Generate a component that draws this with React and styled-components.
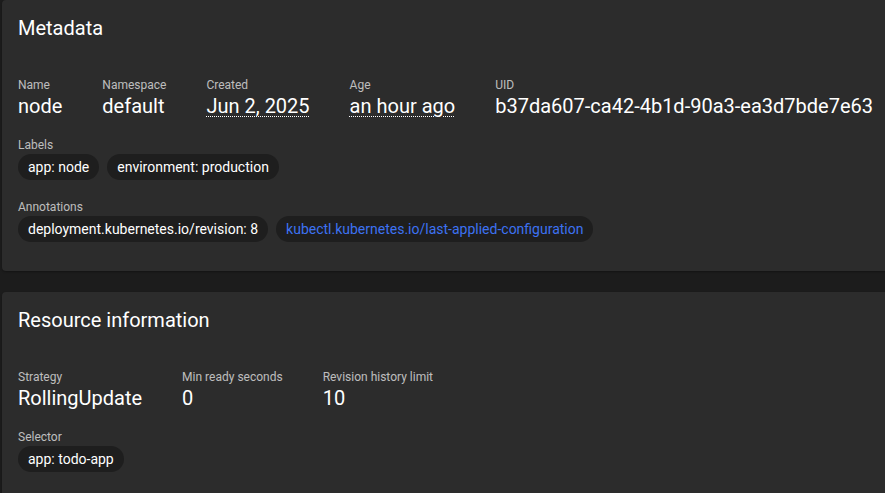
import React from 'react'
import styled, { createGlobalStyle } from 'styled-components'

const GlobalStyle = createGlobalStyle`
  html, body {
    margin: 0;
    padding: 0;
    background: #1c1c1c;
    overflow: hidden;
  }
  body {
    font-family: Roboto, "Liberation Sans", Arial, sans-serif;
    color: #fff;
  }
`

const metadata = {
  fields: [
    { label: 'Name', value: 'node' },
    { label: 'Namespace', value: 'default' },
    { label: 'Created', value: 'Jun 2, 2025', dotted: true },
    { label: 'Age', value: 'an hour ago', dotted: true },
    { label: 'UID', value: 'b37da607-ca42-4b1d-90a3-ea3d7bde7e63' },
  ],
  labels: ['app: node', 'environment: production'],
  annotations: [
    { text: 'deployment.kubernetes.io/revision: 8' },
    { text: 'kubectl.kubernetes.io/last-applied-configuration', link: true },
  ],
}

const resource = {
  fields: [
    { label: 'Strategy', value: 'RollingUpdate' },
    { label: 'Min ready seconds', value: '0' },
    { label: 'Revision history limit', value: '10' },
  ],
  selector: ['app: todo-app'],
}

const App = () => {
  return (
    <>
      <GlobalStyle />
      <Page>
        <Card>
          <Title>Metadata</Title>
          <Body>
            <FieldRow>
              {metadata.fields.map((f) => (
                <Field key={f.label}>
                  <Label>{f.label}</Label>
                  <Value $dotted={f.dotted}>{f.value}</Value>
                </Field>
              ))}
            </FieldRow>
            <Section>
              <Label>Labels</Label>
              <Chips>
                {metadata.labels.map((l) => (
                  <Chip key={l}>{l}</Chip>
                ))}
              </Chips>
            </Section>
            <Section>
              <Label>Annotations</Label>
              <Chips>
                {metadata.annotations.map((a) => (
                  <Chip key={a.text} $link={a.link}>{a.text}</Chip>
                ))}
              </Chips>
            </Section>
          </Body>
        </Card>

        <Card>
          <Title>Resource information</Title>
          <Body>
            <FieldRow>
              {resource.fields.map((f) => (
                <Field key={f.label}>
                  <Label>{f.label}</Label>
                  <Value>{f.value}</Value>
                </Field>
              ))}
            </FieldRow>
            <Section>
              <Label>Selector</Label>
              <Chips>
                {resource.selector.map((s) => (
                  <Chip key={s}>{s}</Chip>
                ))}
              </Chips>
            </Section>
          </Body>
        </Card>
      </Page>
    </>
  )
}

export default App

const Page = styled.div`
  display: flex;
  flex-direction: column;
  gap: 21px;
  padding-left: 2px;
  width: 900px;
`

const Card = styled.div`
  background: #2c2c2c;
  border-radius: 4px;
  padding: 16px 16px 29px 16px;
  box-shadow: 0 1px 2px rgba(0, 0, 0, 0.3);
`

const Title = styled.div`
  font-size: 20px;
  line-height: 24px;
  font-weight: 400;
  color: #fff;
`

const Body = styled.div`
  display: flex;
  flex-direction: column;
  gap: 19px;
  margin-top: 37px;
`

const FieldRow = styled.div`
  display: flex;
  gap: 40px;
`

const Field = styled.div`
  display: flex;
  flex-direction: column;
  gap: 1px;
`

const Label = styled.div`
  font-size: 12px;
  line-height: 16px;
  color: rgba(255, 255, 255, 0.7);
`

const Value = styled.div`
  font-size: 20px;
  line-height: 24px;
  color: #fff;
  white-space: nowrap;
  text-decoration: ${(p) => (p.$dotted ? 'underline dotted' : 'none')};
  text-decoration-thickness: 1px;
  text-underline-offset: 3px;
`

const Section = styled.div`
  display: flex;
  flex-direction: column;
  gap: 1px;
`

const Chips = styled.div`
  display: flex;
  gap: 8px;
`

const Chip = styled.div`
  height: 26px;
  padding: 0 10px;
  display: flex;
  align-items: center;
  border-radius: 13px;
  background: #1e1e1e;
  font-size: 14px;
  color: ${(p) => (p.$link ? '#3d72f2' : '#fff')};
  white-space: nowrap;
  cursor: ${(p) => (p.$link ? 'pointer' : 'default')};
`
